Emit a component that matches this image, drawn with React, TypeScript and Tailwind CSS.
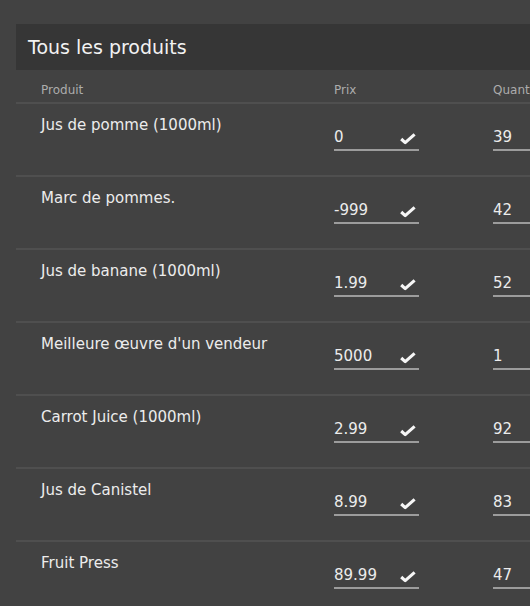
import React from 'react';

const products = [
    { name: 'Jus de pomme (1000ml)', price: '0', qty: '39' },
    { name: 'Marc de pommes.', price: '-999', qty: '42' },
    { name: 'Jus de banane (1000ml)', price: '1.99', qty: '52' },
    { name: "Meilleure œuvre d'un vendeur", price: '5000', qty: '1' },
    { name: 'Carrot Juice (1000ml)', price: '2.99', qty: '92' },
    { name: 'Jus de Canistel', price: '8.99', qty: '83' },
    { name: 'Fruit Press', price: '89.99', qty: '47' },
];

const Check = () => (
    <svg width="18" height="13" viewBox="0 0 18 13" className="mt-[6px] mr-[2px] shrink-0">
        <polyline
            points="2.2,7 6.2,10.6 15.6,2.4"
            fill="none"
            stroke="#f6f6f6"
            strokeWidth="3.1"
            strokeLinejoin="round"
        />
    </svg>
);

const Field = ({ value, check, width }: { value: string; check?: boolean; width: string }) => (
    <div className={`flex justify-between h-[25px] border-b-2 border-[#9c9c9c] ${width}`}>
        <span className="leading-[22px] text-[15px] text-[#ececec]">{value}</span>
        {check && <Check />}
    </div>
);

export default function App() {
    return (
        <div
            className="h-[606px] w-[530px] overflow-hidden bg-[#424242]"
            style={{ fontFamily: '"DejaVu Sans", sans-serif' }}
        >
            <div className="ml-4 mt-6 w-[700px]">
                {/* Title bar */}
                <div className="flex items-center h-[46px] pl-3 bg-[#363636]">
                    <h2 className="text-[19px] text-[#f2f2f2]">Tous les produits</h2>
                </div>

                {/* Column headers */}
                <div className="grid grid-cols-[293px_159px_1fr] h-[34px] pt-[11px] border-b-2 border-[#4f4f4f] text-[12px] leading-[18px] text-[#acacac]">
                    <div className="pl-[25px]">Produit</div>
                    <div className="pl-[25px]">Prix</div>
                    <div className="pl-[25px]">Quantité</div>
                </div>

                {/* Rows */}
                {products.map((p) => (
                    <div
                        key={p.name}
                        className="grid grid-cols-[293px_159px_1fr] h-[73px] border-b-2 border-[#4f4f4f]"
                    >
                        <div className="pl-[25px] pt-[10px] text-[15px] leading-[22px] text-[#ececec]">{p.name}</div>
                        <div className="pl-[25px] pt-[22px]">
                            <Field value={p.price} check width="w-[85px]" />
                        </div>
                        <div className="pl-[25px] pt-[22px]">
                            <Field value={p.qty} width="w-[85px]" />
                        </div>
                    </div>
                ))}
            </div>
        </div>
    );
}
